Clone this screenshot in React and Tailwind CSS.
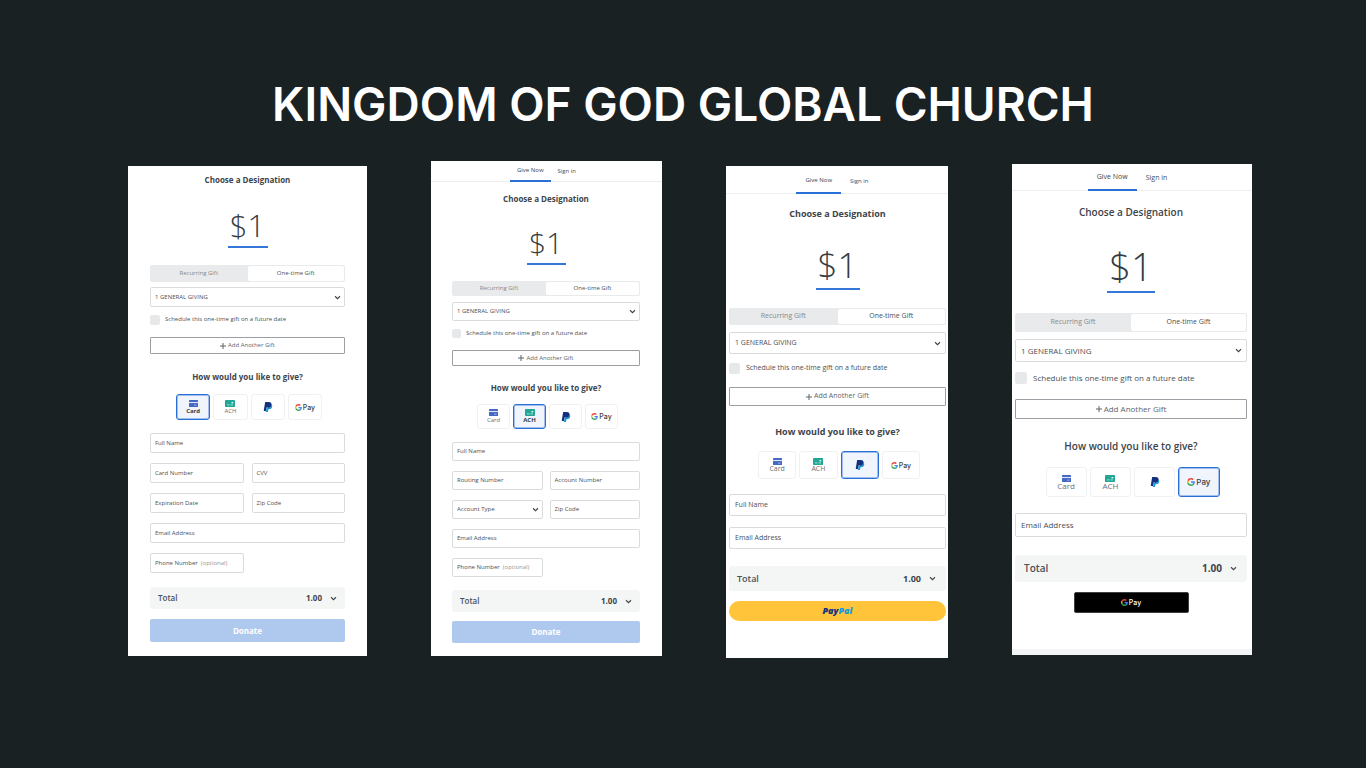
import React from "react";

const sizes = {
  a: {
    card: "mt-[5px] pb-[14px]",
    body: "px-[22px]",
    title: "mt-[8px] text-[8px] leading-[12px] font-bold",
    amount: "mt-[20px] h-[42px] w-[40px] text-[31px] leading-[39px] border-b-2",
    toggle: "mt-[17px] h-[17px] text-[6px]",
    select: "mt-[5px] h-[20px]",
    pad: "pl-[4px]",
    chevron: "right-[4px]",
    schedule: "mt-[7px] h-[11px] gap-[5px]",
    box: "size-[10px]",
    add: "mt-[12px] h-[17px]",
    text: "text-[6px]",
    heading: "mt-[17px] text-[8px] leading-[12px] font-bold",
    methods: "mt-[11px] h-[26px] w-[149px]",
    wallet: "text-[7px]",
    fields: "mt-[13px] gap-x-[8px] gap-y-[10px] auto-rows-[20px]",
    total: "mt-[14px] h-[22px] text-[8px] px-[8px]",
    pay: "mt-[10px] h-[23px] text-[8px]",
  },
  b: {
    card: "pb-[13px]",
    tabs: "h-[21px] text-[6px]",
    tab: "px-[7px]",
    body: "pl-[21px] pr-[22px]",
    title: "mt-[11px] text-[8px] leading-[12px] font-bold",
    amount: "mt-[20px] h-[40px] w-[39px] text-[30px] leading-[36px] border-b-2",
    toggle: "mt-[16px] h-[15px] text-[6px]",
    select: "mt-[6px] h-[19px]",
    pad: "pl-[4px]",
    chevron: "right-[4px]",
    schedule: "mt-[7px] h-[10px] gap-[5px]",
    box: "size-[9px]",
    add: "mt-[12px] h-[16px]",
    text: "text-[6px]",
    heading: "mt-[16px] text-[8px] leading-[12px] font-bold",
    methods: "mt-[10px] h-[25px] w-[144px]",
    wallet: "text-[7px]",
    fields: "mt-[13px] gap-x-[7px] gap-y-[10px] auto-rows-[19px]",
    total: "mt-[13px] h-[22px] text-[8px] px-[8px]",
    pay: "mt-[9px] h-[22px] text-[8px]",
  },
  c: {
    card: "mt-[5px] pb-[37px]",
    tabs: "h-[28px] text-[6px]",
    tab: "px-[9px] pt-[3px]",
    body: "pl-[3px] pr-[2px]",
    title: "mt-[13px] text-[9px] leading-[14px] font-bold",
    amount: "mt-[22px] h-[47px] w-[44px] text-[35px] leading-[43px] border-b-2",
    toggle: "mt-[18px] h-[17px] text-[7px]",
    select: "mt-[7px] h-[22px]",
    pad: "pl-[5px]",
    chevron: "right-[5px]",
    schedule: "mt-[8px] h-[12px] gap-[6px]",
    box: "size-[11px]",
    add: "mt-[13px] h-[19px]",
    text: "text-[7px]",
    heading: "mt-[19px] text-[9px] leading-[14px] font-bold",
    methods: "mt-[12px] h-[28px] w-[165px]",
    wallet: "text-[7px]",
    fields: "mt-[15px] gap-y-[11px] auto-rows-[22px]",
    total: "mt-[17px] h-[25px] text-[9px] pl-[8px] pr-[10px]",
    pay: "mt-[10px] h-[20px]",
  },
  d: {
    card: "mt-[3px]",
    tabs: "h-[27px] text-[7px]",
    tab: "px-[9px] pt-[2px]",
    body: "pl-[3px] pr-[5px]",
    title: "mt-[14px] text-[10px] leading-[14px] font-semibold",
    amount: "mt-[24px] h-[50px] w-[48px] text-[38px] leading-[46px] border-b-2",
    toggle: "mt-[20px] h-[19px] text-[7px]",
    select: "mt-[7px] h-[23px]",
    pad: "pl-[5px]",
    chevron: "right-[5px]",
    schedule: "mt-[10px] h-[12px] gap-[6px]",
    box: "size-[12px]",
    add: "mt-[15px] h-[20px]",
    text: "text-[8px]",
    heading: "mt-[20px] text-[10px] leading-[14px] font-semibold",
    methods: "mt-[14px] h-[30px] w-[177px]",
    wallet: "text-[8px]",
    fields: "mt-[16px] gap-y-[11px] auto-rows-[24px]",
    total: "mt-[18px] h-[27px] text-[10px] pl-[9px] pr-[10px]",
    pay: "mt-[10px] h-[21px] w-[115px]",
  },
};

function Chevron({ className = "" }) {
  return (
    <svg viewBox="0 0 8 8" className={`pointer-events-none size-[7px] ${className}`} fill="none" stroke="#3d444b" strokeWidth="1.3" aria-hidden="true">
      <path d="M1.2 2.6 4 5.4l2.8-2.8" />
    </svg>
  );
}

function CardIcon() {
  return (
    <svg viewBox="0 0 18 12" className="h-[7px] w-[9px]" preserveAspectRatio="none" aria-hidden="true">
      <rect width="18" height="12" rx="1" fill="#4668c5" />
      <rect y="3.4" width="18" height="1.8" fill="#dfe6f7" />
      <rect x="10" y="8" width="5" height="1.6" fill="#9fb3e4" />
    </svg>
  );
}

function AchIcon() {
  return (
    <svg viewBox="0 0 20 12" className="h-[7px] w-[10px]" preserveAspectRatio="none" aria-hidden="true">
      <rect width="20" height="12" rx="1.4" fill="#22a796" />
      <path d="M4 8.4h5M11 8.4h5" stroke="#c9efe9" strokeWidth="1.4" />
      <path d="M13 3.4h3.4v2.4H13z" fill="#e6f8f5" />
    </svg>
  );
}

function PaypalIcon() {
  return (
    <svg viewBox="0 0 24 24" className="size-[10px]" aria-hidden="true">
      <path fill="#179bd7" d="M21.222 6.917a3.35 3.35 0 0 0-.607-.541c-.013.076-.026.175-.041.254-.93 4.778-4.005 7.201-9.138 7.201h-2.19a.563.563 0 0 0-.556.479l-1.187 7.527h-.506l-.24 1.516a.56.56 0 0 0 .554.647h3.882c.46 0 .85-.334.922-.788.06-.26.76-4.852.816-5.09a.932.932 0 0 1 .923-.788h.58c3.76 0 6.705-1.528 7.565-5.946.36-1.847.174-3.388-.777-4.471z" />
      <path fill="#12327f" d="M7.076 21.337H2.47a.641.641 0 0 1-.633-.74L4.944.901C5.026.382 5.474 0 5.998 0h7.46c2.57 0 4.578.543 5.69 1.81 1.01 1.15 1.304 2.42 1.012 4.287-.023.143-.047.288-.077.437-.983 5.05-4.349 6.797-8.647 6.797h-2.19c-.524 0-.968.382-1.05.9l-1.12 7.106z" />
      <path fill="#12327f" d="M20.615 6.376c-.013.076-.026.175-.041.254-.93 4.778-4.005 7.201-9.138 7.201L14 9l5-5z" />
    </svg>
  );
}

function GoogleG() {
  return (
    <svg viewBox="0 0 48 48" className="size-[1em]" aria-hidden="true">
      <path fill="#EA4335" d="M24 9.5c3.54 0 6.71 1.22 9.21 3.6l6.85-6.85C35.9 2.38 30.47 0 24 0 14.62 0 6.51 5.38 2.56 13.22l7.98 6.19C12.43 13.72 17.74 9.5 24 9.5z" />
      <path fill="#4285F4" d="M46.98 24.55c0-1.57-.15-3.09-.38-4.55H24v9.02h12.94c-.58 2.96-2.26 5.48-4.78 7.18l7.73 6c4.51-4.18 7.09-10.36 7.09-17.65z" />
      <path fill="#FBBC05" d="M10.53 28.59c-.48-1.45-.76-2.99-.76-4.59s.27-3.14.76-4.59l-7.98-6.19C.92 16.46 0 20.12 0 24c0 3.88.92 7.54 2.56 10.78l7.97-6.19z" />
      <path fill="#34A853" d="M24 48c6.48 0 11.93-2.13 15.89-5.81l-7.73-6c-2.15 1.45-4.92 2.3-8.16 2.3-6.26 0-11.57-4.22-13.47-9.91l-7.98 6.19C6.51 42.62 14.62 48 24 48z" />
    </svg>
  );
}

function GPay({ className }) {
  return (
    <span className={`flex items-center gap-px font-['Inter'] leading-none font-medium ${className}`}>
      <GoogleG />
      Pay
    </span>
  );
}

function Field({ s, label, note, wide }) {
  return (
    <label className={`flex items-center gap-[3px] rounded-[2px] border border-[#d9dbdd] ${s.pad} ${s.text} ${wide ? "col-span-2" : ""}`}>
      <span className="whitespace-nowrap">{label}</span>
      {note && <span className="whitespace-nowrap text-[#94989c]">{note}</span>}
      <input className="w-0 min-w-0 flex-1 bg-transparent outline-none" />
    </label>
  );
}

function Picker({ s, label, option, className }) {
  return (
    <div className={`relative flex ${className}`}>
      <select aria-label={label} className={`block size-full appearance-none rounded-[2px] border border-[#d9dbdd] bg-white ${s.pad} ${s.text}`}>
        <option>{option}</option>
      </select>
      <Chevron className={`absolute inset-y-0 my-auto ${s.chevron}`} />
    </div>
  );
}

const methodList = [
  { id: "card", label: "Card", Icon: CardIcon },
  { id: "ach", label: "ACH", Icon: AchIcon },
  { id: "paypal", name: "PayPal", Icon: PaypalIcon },
  { id: "gpay", wallet: true },
];

function GiveForm({ size, method, children, action, footer }) {
  const s = sizes[size];
  return (
    <section className={`min-w-0 bg-white text-[#4a5056] ${s.card}`}>
      {s.tabs && (
        <nav className={`flex justify-center border-b border-[#eceeef] ${s.tabs}`}>
          <a href="#give" className={`-mb-px flex items-center border-b-2 border-[#2a6fd6] text-[#3d444b] ${s.tab}`}>Give Now</a>
          <a href="#signin" className={`flex items-center ${s.tab}`}>Sign in</a>
        </nav>
      )}
      <form className={`flex flex-col overflow-hidden ${s.body}`} onSubmit={(e) => e.preventDefault()}>
        <h2 className={`text-center text-[#3d444b] ${s.title}`}>Choose a Designation</h2>
        <output className={`mx-auto block border-[#3577d9] text-center font-light text-[#343b42] ${s.amount}`}>$1</output>
        <div className={`grid grid-cols-2 rounded-[2px] bg-[#e9eaeb] ${s.toggle}`}>
          <button type="button" className="text-[#85898d]">Recurring Gift</button>
          <button type="button" className="my-px mr-px rounded-[2px] bg-white">One-time Gift</button>
        </div>
        <Picker s={s} label="Fund" option="1 GENERAL GIVING" className={s.select} />
        <label className={`flex items-center ${s.schedule} ${s.text}`}>
          <input type="checkbox" className={`appearance-none rounded-[2px] bg-[#e7e8ea] ${s.box}`} />
          Schedule this one-time gift on a future date
        </label>
        <button type="button" className={`flex items-center justify-center gap-[2px] rounded-[1px] border border-[#9b9ea2] text-[#5f656a] ${s.add} ${s.text}`}>
          <svg viewBox="0 0 6 6" className="size-[6px]" stroke="#5f656a" aria-hidden="true"><path d="M3 0v6M0 3h6" /></svg>
          Add Another Gift
        </button>
        <h3 className={`text-center text-[#3d444b] ${s.heading}`}>How would you like to give?</h3>
        <div className={`mx-auto grid grid-cols-4 ${s.methods}`}>
          {methodList.map(({ id, label, name, wallet, Icon }) => (
            <button
              type="button"
              key={id}
              aria-label={name}
              className={`ml-[3px] flex flex-col items-center justify-center rounded-[3px] border leading-[8px] ${s.text} ${
                id === method
                  ? "border-[#2a6fd6] bg-[#eff4fd] font-bold text-[#343b42] ring-1 ring-inset ring-[#2a6fd6]/40"
                  : "border-[#f0f1f2] text-[#6a6f75]"
              }`}
            >
              {wallet ? <GPay className={`text-[#3c4043] ${s.wallet}`} /> : <Icon />}
              {label}
            </button>
          ))}
        </div>
        <div className={`grid grid-cols-2 ${s.fields}`}>{children(s)}</div>
        <div className={`flex items-center justify-between rounded-[3px] bg-[#f4f6f6] ${s.total}`}>
          <span className="font-semibold">Total</span>
          <span className="flex items-center gap-[8px] font-bold text-[#3d444b]">
            1.00
            <Chevron />
          </span>
        </div>
        {action(s)}
      </form>
      {footer}
    </section>
  );
}

function Donate(s) {
  return <button className={`rounded-[2px] bg-[#afc8ee] font-bold text-white ${s.pay}`}>Donate</button>;
}

export default function App() {
  return (
    <main className="min-h-screen bg-[#1a2122] font-['Open_Sans','Noto_Sans',sans-serif]">
      <h1 className="pt-[76px] text-center font-['Inter',sans-serif] text-[46px] leading-[56px] font-semibold text-white">
        KINGDOM OF GOD GLOBAL CHURCH
      </h1>
      <div className="mt-[29px] grid grid-cols-[239fr_231fr_222fr_240fr] items-start gap-16 pr-[114px] pb-8 pl-32">
        <GiveForm size="a" method="card" action={Donate}>
          {(s) => (
            <>
              <Field s={s} label="Full Name" wide />
              <Field s={s} label="Card Number" />
              <Field s={s} label="CVV" />
              <Field s={s} label="Expiration Date" />
              <Field s={s} label="Zip Code" />
              <Field s={s} label="Email Address" wide />
              <Field s={s} label="Phone Number" note="(optional)" />
            </>
          )}
        </GiveForm>
        <GiveForm size="b" method="ach" action={Donate}>
          {(s) => (
            <>
              <Field s={s} label="Full Name" wide />
              <Field s={s} label="Routing Number" />
              <Field s={s} label="Account Number" />
              <Picker s={s} label="Account Type" option="Account Type" className="size-full" />
              <Field s={s} label="Zip Code" />
              <Field s={s} label="Email Address" wide />
              <Field s={s} label="Phone Number" note="(optional)" />
            </>
          )}
        </GiveForm>
        <GiveForm
          size="c"
          method="paypal"
          action={(s) => (
            <button className={`rounded-full bg-[#ffc439] text-[9px] font-extrabold text-[#12327f] italic ${s.pay}`}>
              Pay<span className="text-[#179bd7]">Pal</span>
            </button>
          )}
        >
          {(s) => (
            <>
              <Field s={s} label="Full Name" wide />
              <Field s={s} label="Email Address" wide />
            </>
          )}
        </GiveForm>
        <GiveForm
          size="d"
          method="gpay"
          footer={<div className="mt-[36px] h-[6px] bg-[#f3f4f5]" />}
          action={(s) => (
            <button className={`mx-auto flex items-center justify-center rounded-[2px] border border-[#3c4043] bg-black ${s.pay}`}>
              <GPay className="text-[7px] text-white" />
            </button>
          )}
        >
          {(s) => <Field s={s} label="Email Address" wide />}
        </GiveForm>
      </div>
    </main>
  );
}
